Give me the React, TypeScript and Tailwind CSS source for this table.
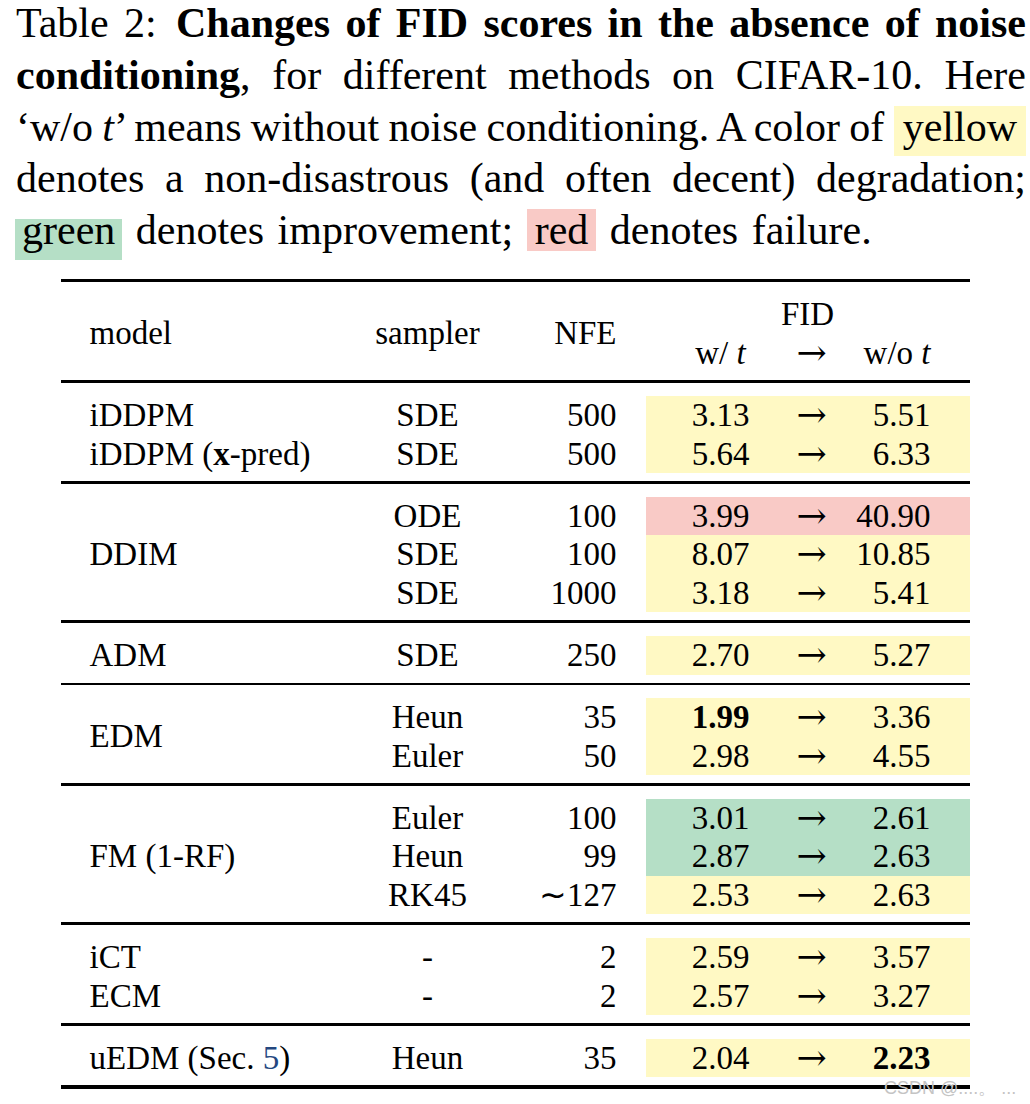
import React from 'react';

type Tint = 'y' | 'r' | 'g';

type Row = {
  model?: React.ReactNode;
  sampler: string;
  nfe: string;
  before: string;
  after: string;
  tint: Tint;
  boldBefore?: boolean;
  boldAfter?: boolean;
};

type Section = {
  model?: React.ReactNode; // set when the model name spans every row of the block
  rows: Row[];
};

const tints: Record<Tint, string> = {
  y: 'bg-[#fff9c4]',
  r: 'bg-[#f9cac6]',
  g: 'bg-[#b5dfc6]',
};

const sections: Section[] = [
  {
    rows: [
      { model: 'iDDPM', sampler: 'SDE', nfe: '500', before: '3.13', after: '5.51', tint: 'y' },
      {
        model: (
          <>
            iDDPM (<span className="font-bold">x</span>-pred)
          </>
        ),
        sampler: 'SDE',
        nfe: '500',
        before: '5.64',
        after: '6.33',
        tint: 'y',
      },
    ],
  },
  {
    model: 'DDIM',
    rows: [
      { sampler: 'ODE', nfe: '100', before: '3.99', after: '40.90', tint: 'r' },
      { sampler: 'SDE', nfe: '100', before: '8.07', after: '10.85', tint: 'y' },
      { sampler: 'SDE', nfe: '1000', before: '3.18', after: '5.41', tint: 'y' },
    ],
  },
  {
    model: 'ADM',
    rows: [{ sampler: 'SDE', nfe: '250', before: '2.70', after: '5.27', tint: 'y' }],
  },
  {
    model: 'EDM',
    rows: [
      { sampler: 'Heun', nfe: '35', before: '1.99', after: '3.36', tint: 'y', boldBefore: true },
      { sampler: 'Euler', nfe: '50', before: '2.98', after: '4.55', tint: 'y' },
    ],
  },
  {
    model: 'FM (1-RF)',
    rows: [
      { sampler: 'Euler', nfe: '100', before: '3.01', after: '2.61', tint: 'g' },
      { sampler: 'Heun', nfe: '99', before: '2.87', after: '2.63', tint: 'g' },
      { sampler: 'RK45', nfe: '\u223C127', before: '2.53', after: '2.63', tint: 'y' },
    ],
  },
  {
    rows: [
      { model: 'iCT', sampler: '-', nfe: '2', before: '2.59', after: '3.57', tint: 'y' },
      { model: 'ECM', sampler: '-', nfe: '2', before: '2.57', after: '3.27', tint: 'y' },
    ],
  },
  {
    model: (
      <>
        uEDM (Sec. <span className="text-[#24477f]">5</span>)
      </>
    ),
    rows: [{ sampler: 'Heun', nfe: '35', before: '2.04', after: '2.23', tint: 'y', boldAfter: true }],
  },
];

function Fid({ before, after, bold1, bold2 }: { before: React.ReactNode; after: React.ReactNode; bold1?: boolean; bold2?: boolean }) {
  return (
    <div className="flex h-[38.5px] leading-[38.5px]">
      <div className={`w-[150px] text-center ${bold1 ? 'font-bold' : ''}`}>{before}</div>
      <div className="w-[32px] flex justify-center items-center font-['DejaVu_Serif',serif] text-[36px] font-normal">→</div>
      <div className={`w-[103px] text-right ${bold2 ? 'font-bold' : ''}`}>{after}</div>
    </div>
  );
}

function Block({ section }: { section: Section }) {
  return (
    <div className="flex pt-[13px] pb-[8px]">
      <div className="w-[289px] pl-[29px] flex flex-col justify-center">
        {section.model ? (
          <div className="leading-[38.5px]">{section.model}</div>
        ) : (
          section.rows.map((r, i) => (
            <div key={i} className="h-[38.5px] leading-[38.5px] whitespace-nowrap">
              {r.model}
            </div>
          ))
        )}
      </div>
      <div className="w-[156px] flex flex-col">
        {section.rows.map((r, i) => (
          <div key={i} className="h-[38.5px] leading-[38.5px] text-center">
            {r.sampler}
          </div>
        ))}
      </div>
      <div className="w-[111px] flex flex-col">
        {section.rows.map((r, i) => (
          <div key={i} className="h-[38.5px] leading-[38.5px] text-right whitespace-nowrap">
            {r.nfe}
          </div>
        ))}
      </div>
      <div className="ml-[29px] w-[324px] flex flex-col">
        {section.rows.map((r, i) => (
          <div key={i} className={tints[r.tint]}>
            <Fid before={r.before} after={r.after} bold1={r.boldBefore} bold2={r.boldAfter} />
          </div>
        ))}
      </div>
    </div>
  );
}

export default function App() {
  return (
    <div className="relative w-[1030px] h-[1104px] bg-white text-black overflow-hidden font-['Liberation_Serif','Times_New_Roman',serif]">
      {/* Caption */}
      <div className="-mt-[2px] ml-[16px] w-[1010px] text-[42px] leading-[51.8px] isolate">
        <div className="h-[51.8px] text-justify [text-align-last:justify] [word-spacing:-6px]">
          <span className="mr-[4px]">Table 2:</span> <b>Changes of FID scores in the absence of noise</b>
        </div>
        <div className="h-[51.8px] text-justify [text-align-last:justify] [word-spacing:-6px]">
          <b>conditioning</b>, for different methods on CIFAR-10. Here
        </div>
        <div className="h-[51.8px] text-justify [text-align-last:justify] [word-spacing:-6px]">
          ‘w/o <i>t</i>’ means without noise conditioning. A color of{' '}
          <span className="inline-block bg-[#fff9c4] px-[9px] leading-[43.1px] pb-[7.6px] -mb-[4px] [word-spacing:0px]">yellow</span>
        </div>
        <div className="h-[51.8px] text-justify [text-align-last:justify] [word-spacing:-6px]">
          denotes a non-disastrous (and often decent) degradation;
        </div>
        <div className="h-[51.8px] -ml-[1px] [word-spacing:3px]">
          <span className="inline-block bg-[#b5dfc6] px-[7px] leading-[23.7px] pb-[17.3px] -mb-[4px]">green</span> denotes
          improvement;{' '}
          <span className="inline-block bg-[#f9cac6] px-[8px] leading-[39.7px] pt-[2px]">red</span> denotes failure.
        </div>
      </div>

      {/* Table */}
      <div className="mt-[22px] mx-auto w-[909px] text-[33px]">
        <div className="h-[3.5px] bg-black" />
        <div className="flex pt-[13px] pb-[8px]">
          <div className="w-[289px] pl-[29px] flex items-center">model</div>
          <div className="w-[156px] flex items-center justify-center">sampler</div>
          <div className="w-[111px] flex items-center justify-end">NFE</div>
          <div className="ml-[29px] w-[324px] flex flex-col">
            <div className="h-[38.5px] leading-[38.5px] text-center">FID</div>
            <Fid
              before={
                <>
                  w/ <i>t</i>
                </>
              }
              after={
                <>
                  w/o <i>t</i>
                </>
              }
            />
          </div>
        </div>
        {sections.map((s, i) => (
          <React.Fragment key={i}>
            <div className="h-[2.7px] bg-black" />
            <Block section={s} />
          </React.Fragment>
        ))}
        <div className="h-[3.5px] bg-black" />
      </div>

      {/* watermark */}
      <div className="absolute left-[884px] top-[1075px] text-[18px] text-[#c4c4c4] font-['Liberation_Sans',Arial,sans-serif] whitespace-nowrap">
        CSDN @....。 ...
      </div>
    </div>
  );
}
